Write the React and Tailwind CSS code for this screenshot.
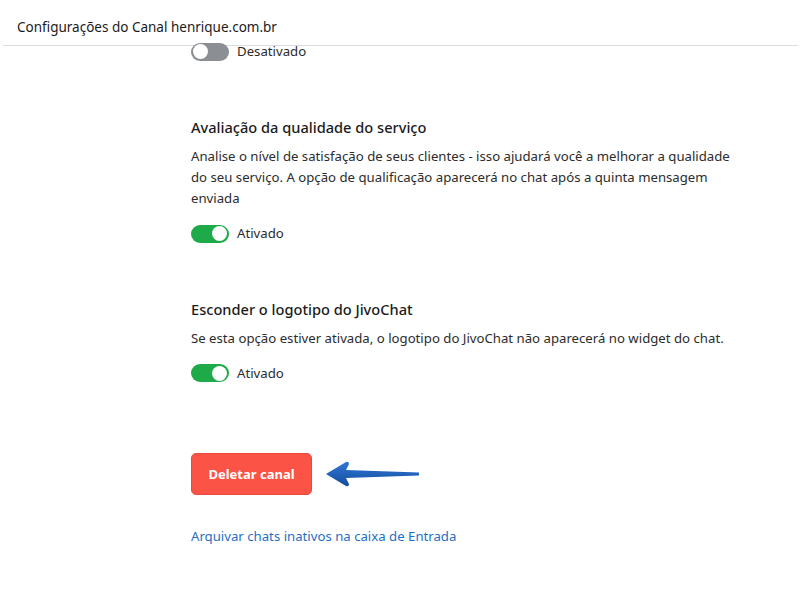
import React from 'react';

const Toggle = ({ on }) => (
  <span
    className={
      'relative inline-flex h-[18px] w-[38px] items-center rounded-full ' +
      (on ? 'bg-[#1eaa48] justify-end' : 'bg-[#8b8e93] justify-start')
    }
  >
    <span className="mx-[2px] h-[15px] w-[15px] rounded-full bg-white" />
  </span>
);

const Section = ({ title, children }) => (
  <div className="flex flex-col">
    <h2 className="text-[14.6px] font-medium leading-[22px] text-[#1b1b1b]">{title}</h2>
    <p className="mt-[8px] w-[545px] text-[13.2px] leading-[21px] text-[#2c2c2c]">{children}</p>
    <div className="mt-[15px] flex items-center gap-[8px] text-[13.2px] text-[#2c2c2c]">
      <Toggle on />
      <span>Ativado</span>
    </div>
  </div>
);

const Arrow = () => (
  <svg width="100" height="30" viewBox="0 0 100 30">
    <defs>
      <linearGradient id="ar" x1="0" y1="0" x2="0" y2="1">
        <stop offset="0" stopColor="#2f78d8" />
        <stop offset="1" stopColor="#164c9c" />
      </linearGradient>
    </defs>
    <path
      d="M2 15 L22 3 Q25 2 25 5 L22 11 L95 13.5 L95 16.5 L22 19 L25 25 Q25 28 22 27 Z"
      fill="url(#ar)"
    />
  </svg>
);

export default function App() {
  return (
    <div
      className="flex h-[594px] w-[801px] flex-col overflow-hidden bg-white"
      style={{ fontFamily: '"Noto Sans", "Open Sans", sans-serif' }}
    >
      <header className="mx-[3px] flex h-[46px] shrink-0 items-end border-b border-[#dcdcdc] px-[14px] pb-[8px] text-[13.5px] text-[#1b1b1b]">
        Configurações do Canal henrique.com.br
      </header>
      <main className="flex flex-col pl-[191px]">
        <div className="-mt-[4px] flex items-center gap-[8px] text-[13.2px] text-[#2c2c2c]">
          <Toggle />
          <span>Desativado</span>
        </div>
        <div className="mt-[54px]">
          <Section title="Avaliação da qualidade do serviço">
            Analise o nível de satisfação de seus clientes - isso ajudará você a melhorar a qualidade do seu
            serviço. A opção de qualificação aparecerá no chat após a quinta mensagem enviada
          </Section>
        </div>
        <div className="mt-[54px]">
          <Section title="Esconder o logotipo do JivoChat">
            Se esta opção estiver ativada, o logotipo do JivoChat não aparecerá no widget do chat.
          </Section>
        </div>
        <div className="mt-[70px] flex items-center gap-[12px]">
          <button className="h-[42px] w-[121px] rounded-[5px] border border-[#e84b3d] bg-[#fb5446] text-[13px] font-bold text-white">
            Deletar canal
          </button>
          <Arrow />
        </div>
        <a href="#" className="mt-[32px] text-[13.2px] text-[#1f6fc5]">
          Arquivar chats inativos na caixa de Entrada
        </a>
      </main>
    </div>
  );
}
